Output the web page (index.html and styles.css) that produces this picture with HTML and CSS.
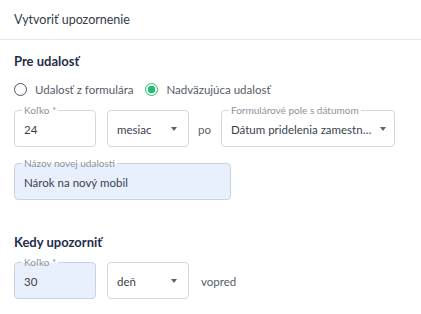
FILE: index.html
```html
<!DOCTYPE html>
<html>
<head>
    <title>Vytvoriť upozornenie</title>
    <meta charset="UTF-8">
    <link rel="stylesheet" href="styles.css">
</head>
<body>
    <div class="header">Vytvoriť upozornenie</div>

    <div class="content">
        <h3 class="section-title">Pre udalosť</h3>

        <div class="radio-row">
            <label class="radio">
                <span class="radio-circle"></span>
                Udalosť z formulára
            </label>
            <label class="radio checked">
                <span class="radio-circle"></span>
                Nadväzujúca udalosť
            </label>
        </div>

        <div class="field-row first">
            <div class="field w-small">
                <span class="field-label">Koľko *</span>
                <div class="value">24</div>
            </div>
            <div class="field w-small select">
                <div class="value">mesiac</div>
                <span class="arrow"></span>
            </div>
            <span class="between">po</span>
            <div class="field w-date select">
                <span class="field-label">Formulárové pole s dátumom</span>
                <div class="value">Dátum pridelenia zamestnanca</div>
                <span class="arrow"></span>
            </div>
        </div>

        <div class="field-row name">
            <div class="field w-name filled">
                <span class="field-label">Názov novej udalosti</span>
                <div class="value">Nárok na nový mobil</div>
            </div>
        </div>

        <h3 class="section-title second">Kedy upozorniť</h3>

        <div class="field-row last">
            <div class="field w-small filled">
                <span class="field-label">Koľko *</span>
                <div class="value">30</div>
            </div>
            <div class="field w-small select">
                <div class="value">deň</div>
                <span class="arrow"></span>
            </div>
            <span class="between after">vopred</span>
        </div>
    </div>
</body>
</html>
```

FILE: styles.css
```css
body {
    margin: 0;
    background: #fff;
    font-family: Lato, "Open Sans", sans-serif;
    color: #3c4250;
}
.header {
    height: 39px;
    line-height: 40px;
    padding: 0 14px;
    font-size: 12.5px;
    color: #363b47;
    border-bottom: 1px solid #e4e7eb;
}
.content {
    padding: 0 14px;
}
.section-title {
    margin: 0;
    padding-top: 12px;
    font-size: 13px;
    line-height: 18px;
    font-weight: 700;
    color: #1f2c4b;
}
.section-title.second {
    padding-top: 33px;
}
.radio-row {
    display: flex;
    align-items: center;
    gap: 12px;
    margin-top: 11px;
    height: 16px;
}
.radio {
    display: flex;
    align-items: center;
    gap: 8px;
    font-size: 11.5px;
    color: #565c68;
}
.radio-circle {
    width: 11px;
    height: 11px;
    border: 1.5px solid #4b5569;
    border-radius: 50%;
    display: inline-block;
}
.radio.checked .radio-circle {
    border-color: #1cc16c;
    background: radial-gradient(circle, #1cc16c 0 3.5px, #fff 4px);
}
.field-row {
    display: flex;
    align-items: center;
}
.field-row.first {
    margin-top: 13px;
}
.field-row.name {
    margin-top: 16px;
}
.field-row.last {
    margin-top: 11px;
}
.field {
    position: relative;
    margin-right: 11px;
    padding: 0 10px 0 9px;
    height: 37px;
    box-sizing: border-box;
    border: 1px solid #d3d8df;
    border-radius: 4px;
    display: flex;
    align-items: center;
    background: #fff;
}
.field-label {
    position: absolute;
    top: -6px;
    left: 7px;
    padding: 0 2px;
    font-size: 10px;
    line-height: 11px;
    color: #8c929c;
    background: #fff;
}
.filled .field-label {
    background: linear-gradient(#fff 50%, #e8f0fd 50%);
}
.field .value {
    flex: 1;
    min-width: 0;
    font-size: 11.5px;
    color: #3b414d;
    white-space: nowrap;
    overflow: hidden;
    text-overflow: ellipsis;
    padding-top: 1px;
}
.arrow {
    width: 0;
    height: 0;
    border-left: 3.5px solid transparent;
    border-right: 3.5px solid transparent;
    border-top: 4px solid #5a6376;
    margin: 0 0 0 6px;
}
.w-small {
    width: 82px;
}
.w-small.select {
    padding-right: 11px;
}
.w-date {
    width: 174px;
    padding-right: 8px;
}
.w-name {
    width: 217px;
}
.filled {
    background: #e8f0fd;
    border-color: #c9d2df;
}
.between {
    font-size: 11.5px;
    color: #565c68;
    margin: 1px 10px 0 -2px;
}
.between.after {
    margin-left: 1px;
}
```
